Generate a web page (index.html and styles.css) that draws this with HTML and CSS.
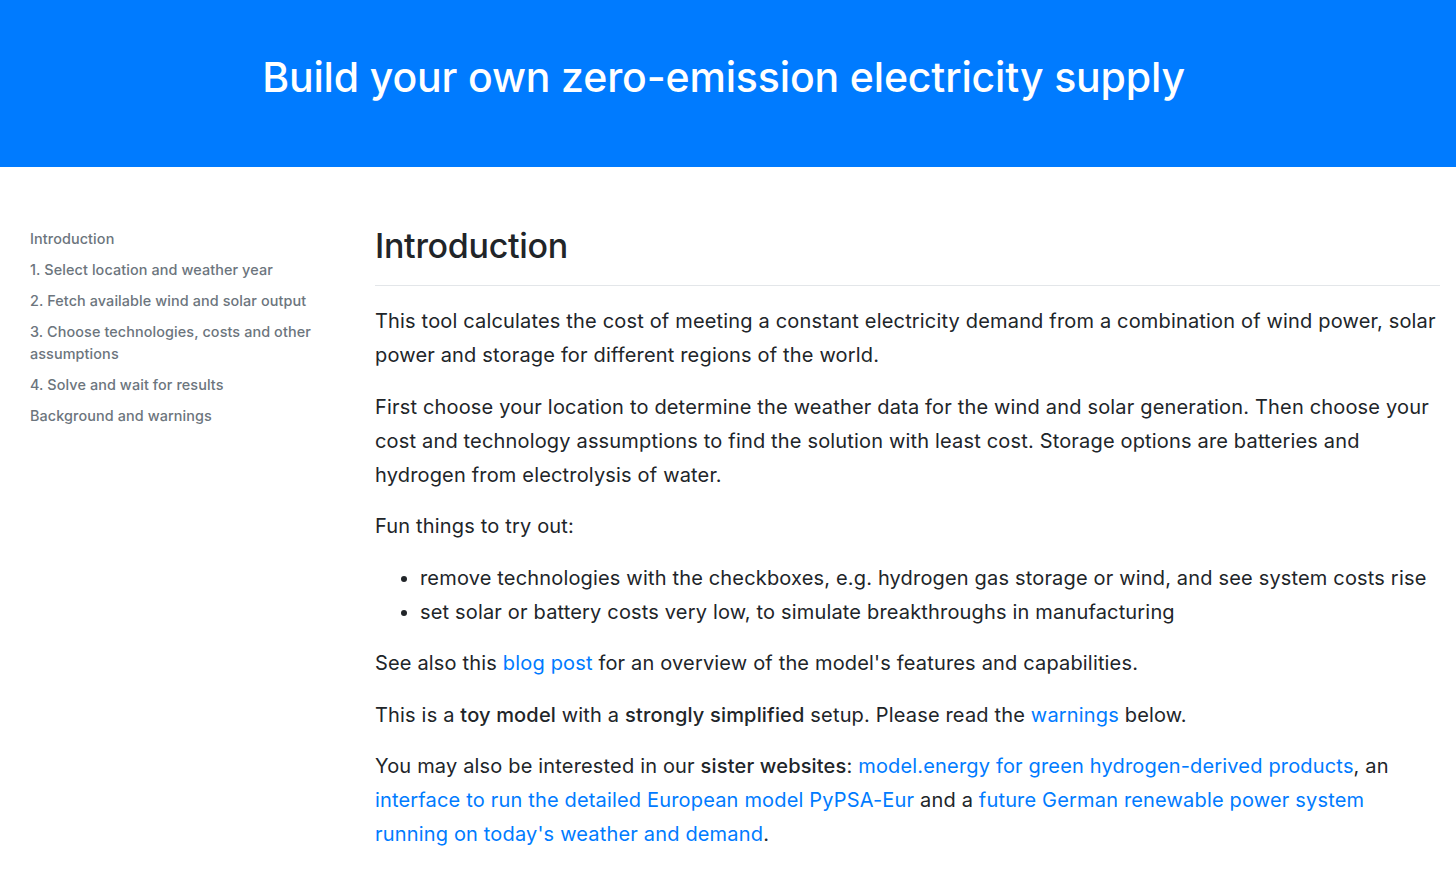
FILE: index.html
```html
<!DOCTYPE html>
<html lang="en">
<head>
<meta charset="utf-8">
<title>Build your own zero-emission electricity supply</title>
<link rel="stylesheet" href="styles.css">
</head>
<body>
<header class="banner">
  <h1 class="banner-title">Build your own zero-emission electricity supply</h1>
</header>
<div class="layout">
  <nav class="sidebar">
    <ul class="toc">
      <li><a href="#intro">Introduction</a></li>
      <li><a href="#location">1. Select location and weather year</a></li>
      <li><a href="#fetch">2. Fetch available wind and solar output</a></li>
      <li><a href="#choose">3. Choose technologies, costs and other assumptions</a></li>
      <li><a href="#solve">4. Solve and wait for results</a></li>
      <li><a href="#background">Background and warnings</a></li>
    </ul>
  </nav>
  <main class="content">
    <h2 class="section-title" id="intro">Introduction</h2>
    <p>This tool calculates the cost of meeting a constant electricity demand from a combination of wind power, solar power and storage for different regions of the world.</p>
    <p>First choose your location to determine the weather data for the wind and solar generation. Then choose your cost and technology assumptions to find the solution with least cost. Storage options are batteries and hydrogen from electrolysis of water.</p>
    <p>Fun things to try out:</p>
    <ul class="bullets">
      <li>remove technologies with the checkboxes, e.g. hydrogen gas storage or wind, and see system costs rise</li>
      <li>set solar or battery costs very low, to simulate breakthroughs in manufacturing</li>
    </ul>
    <p>See also this <a href="#">blog post</a> for an overview of the model's features and capabilities.</p>
    <p>This is a <b>toy model</b> with a <b>strongly simplified</b> setup. Please read the <a href="#">warnings</a> below.</p>
    <p>You may also be interested in our <b>sister websites</b>: <a href="#">model.energy for green hydrogen-derived products</a>, an <a href="#">interface to run the detailed European model PyPSA-Eur</a> and a <a href="#">future German renewable power system running on today's weather and demand</a>.</p>
  </main>
</div>
</body>
</html>
```

FILE: styles.css
```css
* { box-sizing: border-box; }
html, body {
  margin: 0;
  padding: 0;
  background: #ffffff;
  color: #212529;
  font-family: Inter, "Noto Sans", "Liberation Sans", sans-serif;
}
.banner {
  background: #007bff;
  height: 167px;
  display: flex;
  align-items: center;
  justify-content: center;
}
.banner-title {
  margin: 0 9px 14px 0;
  color: #ffffff;
  font-size: 41px;
  font-weight: 500;
  letter-spacing: -0.15px;
}
.layout {
  display: grid;
  grid-template-columns: 345px 1fr;
  padding-top: 57px;
}
.sidebar {
  padding-left: 30px;
  padding-right: 20px;
  padding-top: 4px;
}
.toc {
  list-style: none;
  margin: 0;
  padding: 0;
}
.toc li {
  font-size: 14.4px;
  font-weight: 500;
  line-height: 22px;
  margin-bottom: 9px;
  letter-spacing: 0.1px;
}
.toc a {
  color: #6c757d;
  text-decoration: none;
}
.content {
  padding: 0 16px 0 30px;
  font-size: 20px;
  line-height: 34px;
  letter-spacing: 0.17px;
}
.section-title {
  font-size: 34px;
  font-weight: 500;
  line-height: 44px;
  margin: 0 0 18px 0;
  padding-bottom: 17px;
  border-bottom: 1px solid #e3e6e9;
  letter-spacing: -0.3px;
}
.content p {
  margin: 0 0 17.5px 0;
}
.content b {
  font-weight: 500;
}
.content a {
  color: #007bff;
  text-decoration: none;
}
.bullets {
  margin: 0 0 17.5px 0;
  padding-left: 45px;
}
```
